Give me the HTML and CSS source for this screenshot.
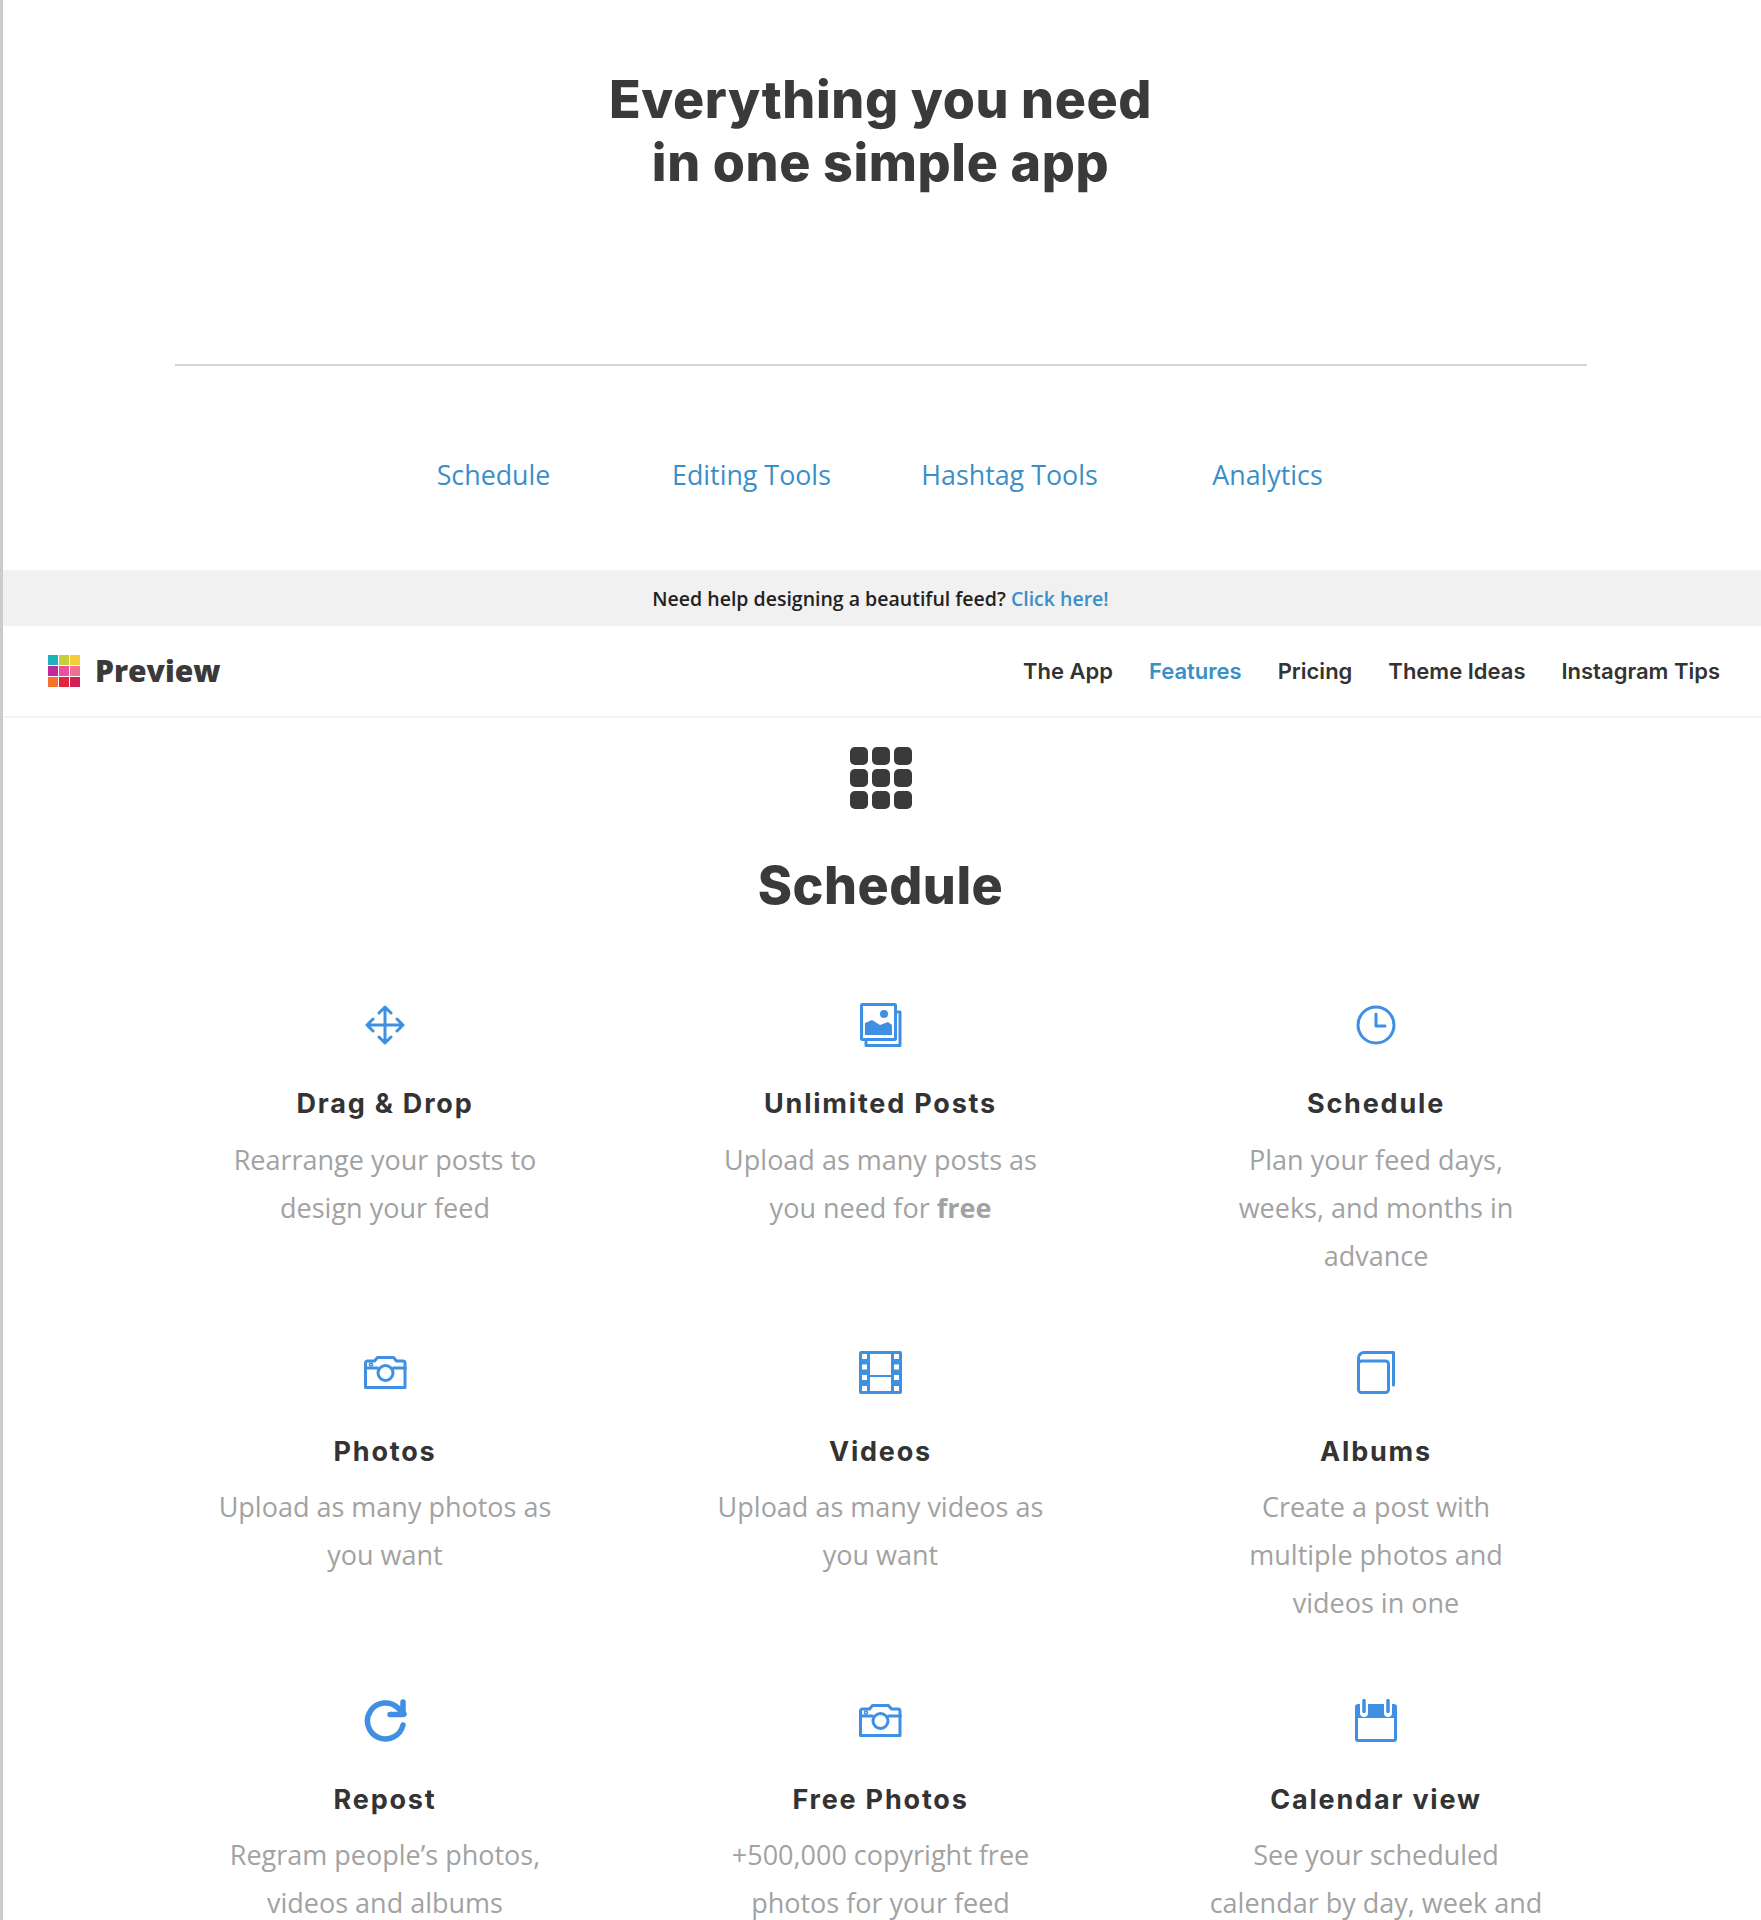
FILE: index.html
```html
<!DOCTYPE html>
<html lang="en">
<head>
  <meta charset="UTF-8" />
  <meta name="viewport" content="width=device-width, initial-scale=1.0" />
  <title>Preview - Features</title>
  <link rel="stylesheet" href="styles.css">
</head>
<body>
  <section class="intro">
    <h1>Everything you need<br>in one simple app</h1>
    <hr class="divider" />
    <div class="tabs">
      <a href="#">Schedule</a>
      <a href="#">Editing Tools</a>
      <a href="#">Hashtag Tools</a>
      <a href="#">Analytics</a>
    </div>
  </section>

  <div class="banner">Need help designing a beautiful feed? <a href="#">Click here!</a></div>

  <nav class="navbar">
    <a class="brand" href="#">
      <svg class="brand-logo" viewBox="0 0 32 32">
        <rect x="0" y="0" width="10" height="10" fill="#1fb1bd"/>
        <rect x="11" y="0" width="10" height="10" fill="#c6cf3b"/>
        <rect x="22" y="0" width="10" height="10" fill="#f6cc3f"/>
        <rect x="0" y="11" width="10" height="10" fill="#c1299b"/>
        <rect x="11" y="11" width="10" height="10" fill="#ea509f"/>
        <rect x="22" y="11" width="10" height="10" fill="#f0708f"/>
        <rect x="0" y="22" width="10" height="10" fill="#f4722b"/>
        <rect x="11" y="22" width="10" height="10" fill="#e0263f"/>
        <rect x="22" y="22" width="10" height="10" fill="#cf2356"/>
      </svg>
      <span class="brand-name">Preview</span>
    </a>
    <div class="nav-links">
      <a href="#">The App</a>
      <a href="#" class="active">Features</a>
      <a href="#">Pricing</a>
      <a href="#">Theme Ideas</a>
      <a href="#">Instagram Tips</a>
    </div>
  </nav>

  <section class="schedule">
    <svg class="section-icon" viewBox="0 0 62 62" fill="#3a3a3a">
      <rect x="0" y="0" width="18" height="18" rx="5"/>
      <rect x="22" y="0" width="18" height="18" rx="5"/>
      <rect x="44" y="0" width="18" height="18" rx="5"/>
      <rect x="0" y="22" width="18" height="18" rx="5"/>
      <rect x="22" y="22" width="18" height="18" rx="5"/>
      <rect x="44" y="22" width="18" height="18" rx="5"/>
      <rect x="0" y="44" width="18" height="18" rx="5"/>
      <rect x="22" y="44" width="18" height="18" rx="5"/>
      <rect x="44" y="44" width="18" height="18" rx="5"/>
    </svg>
    <h2>Schedule</h2>

    <div class="features">
      <div class="feature">
        <div class="feature-icon">
          <svg width="40" height="40" viewBox="0 0 40 40" class="line">
            <path d="M20 2v36M2 20h36M14 8l6-6 6 6M14 32l6 6 6-6M8 14l-6 6 6 6M32 14l6 6-6 6"/>
          </svg>
        </div>
        <h3>Drag &amp; Drop</h3>
        <p>Rearrange your posts to<br>design your feed</p>
      </div>
      <div class="feature">
        <div class="feature-icon">
          <svg width="42" height="45" viewBox="0 0 42 45">
            <path class="line" d="M6 38.5v4h34V9h-4"/>
            <rect class="line" x="1.5" y="1.5" width="34" height="35" rx="1"/>
            <circle cx="24" cy="11" r="4" fill="#3f90e2"/>
            <path d="M5 32V20l7-3 8 5 8-3 4 3v10z" fill="#3f90e2"/>
          </svg>
        </div>
        <h3>Unlimited Posts</h3>
        <p>Upload as many posts as<br>you need for <b>free</b></p>
      </div>
      <div class="feature">
        <div class="feature-icon">
          <svg width="40" height="40" viewBox="0 0 40 40" class="line">
            <circle cx="20" cy="20" r="18"/>
            <path d="M20 9v12h9"/>
          </svg>
        </div>
        <h3>Schedule</h3>
        <p>Plan your feed days,<br>weeks, and months in<br>advance</p>
      </div>

      <div class="feature">
        <div class="feature-icon">
          <svg width="43" height="33" viewBox="0 0 43 33" class="line">
            <path d="M1.5 31.5V7a2 2 0 0 1 2-2h7l3-3.5h16l3 3.5h6.500a2 2 0 0 1 2 2v24.500z"/>
            <path d="M1.500 12h12M29.500 12h12"/>
            <circle cx="21.500" cy="17" r="7.500"/>
            <circle cx="7" cy="8.500" r=".8"/>
          </svg>
        </div>
        <h3>Photos</h3>
        <p>Upload as many photos as<br>you want</p>
      </div>
      <div class="feature">
        <div class="feature-icon">
          <svg width="43" height="43" viewBox="0 0 43 43">
            <rect x="0" y="0" width="43" height="43" rx="2" fill="#3f90e2"/>
            <rect class="hole" x="11" y="3" width="21" height="21"/>
            <rect class="hole" x="11" y="26" width="21" height="14"/>
            <rect class="hole" x="3" y="3" width="5" height="5"/>
            <rect class="hole" x="3" y="13.500" width="5" height="5"/>
            <rect class="hole" x="3" y="24" width="5" height="5"/>
            <rect class="hole" x="3" y="35" width="5" height="5"/>
            <rect class="hole" x="35" y="3" width="5" height="5"/>
            <rect class="hole" x="35" y="13.500" width="5" height="5"/>
            <rect class="hole" x="35" y="24" width="5" height="5"/>
            <rect class="hole" x="35" y="35" width="5" height="5"/>
          </svg>
        </div>
        <h3>Videos</h3>
        <p>Upload as many videos as<br>you want</p>
      </div>
      <div class="feature">
        <div class="feature-icon">
          <svg width="38" height="43" viewBox="0 0 38 43" class="line">
            <rect x="1.500" y="10" width="30" height="31.500" rx="3"/>
            <path d="M1.500 13V7a5.500 5.500 0 0 1 5.500-5.500h29.500V34"/>
          </svg>
        </div>
        <h3>Albums</h3>
        <p>Create a post with<br>multiple photos and<br>videos in one</p>
      </div>

      <div class="feature">
        <div class="feature-icon">
          <svg width="43" height="43" viewBox="0 0 43 43" class="line bold">
            <path d="M39 26a18 18 0 1 1-5-17l6 6"/>
            <path d="M39 3v12.500H26"/>
          </svg>
        </div>
        <h3>Repost</h3>
        <p>Regram people’s photos,<br>videos and albums</p>
      </div>
      <div class="feature">
        <div class="feature-icon">
          <svg width="43" height="33" viewBox="0 0 43 33" class="line">
            <path d="M1.5 31.5V7a2 2 0 0 1 2-2h7l3-3.5h16l3 3.5h6.500a2 2 0 0 1 2 2v24.500z"/>
            <path d="M1.500 12h12M29.500 12h12"/>
            <circle cx="21.500" cy="17" r="7.500"/>
            <circle cx="7" cy="8.500" r=".8"/>
          </svg>
        </div>
        <h3>Free Photos</h3>
        <p>+500,000 copyright free<br>photos for your feed</p>
      </div>
      <div class="feature">
        <div class="feature-icon">
          <svg width="42" height="43" viewBox="0 0 42 43">
            <path d="M3 5h36a3 3 0 0 1 3 3v32a3 3 0 0 1-3 3H3a3 3 0 0 1-3-3V8a3 3 0 0 1 3-3z" fill="#3f90e2"/>
            <rect class="hole" x="3" y="19" width="36" height="21"/>
            <path class="cal-halo" d="M9 5v9M33 5v9"/>
            <path class="cal-ring" d="M9 1.500v11M33 1.500v11"/>
          </svg>
        </div>
        <h3>Calendar view</h3>
        <p>See your scheduled<br>calendar by day, week and</p>
      </div>
    </div>
  </section>
</body>
</html>
```

FILE: styles.css
```css
html, body {
  margin: 0;
  height: 1920px;
  overflow: hidden;
}
body {
  position: relative;
  font-family: 'Open Sans', sans-serif;
  background: #ffffff;
  color: #3a3a3a;
}
body::before {
  content: "";
  position: absolute;
  top: 0;
  left: 0;
  bottom: 0;
  width: 3px;
  background: #cccccc;
}
a { text-decoration: none; }

.intro {
  height: 570px;
  padding-top: 68px;
  box-sizing: border-box;
  text-align: center;
}
h1 {
  margin: 0;
  font-family: 'Inter', sans-serif;
  font-size: 52px;
  font-weight: 800;
  letter-spacing: .6px;
  line-height: 63px;
}
.divider {
  width: 1412px;
  margin: 170px auto 0;
  border: none;
  border-top: 2px solid #d4d4d4;
}
.tabs {
  display: grid;
  grid-template-columns: repeat(4, 258px);
  justify-content: center;
  margin-top: 89px;
  line-height: 40px;
}
.tabs a {
  color: #3a8fc9;
  font-size: 26.800px;
}

.banner {
  height: 56px;
  line-height: 57px;
  text-align: center;
  background: #f1f1f1;
  color: #222;
  font-size: 19.500px;
  font-weight: 600;
}
.banner a { color: #3a8fc9; }

.navbar {
  display: flex;
  justify-content: space-between;
  align-items: center;
  height: 90px;
  padding: 0 41px 0 48px;
  border-bottom: 2px solid #f4f4f4;
}
.brand {
  display: flex;
  align-items: center;
  gap: 15px;
  color: #3a3a3a;
  font-size: 30px;
  font-weight: 800;
}
.brand-logo {
  width: 32px;
  height: 32px;
}
.brand-name { margin-bottom: 2px; }
.nav-links {
  display: flex;
  gap: 36px;
}
.nav-links a {
  font-family: 'Inter', sans-serif;
  font-size: 22px;
  font-weight: 600;
  color: #333;
}
.nav-links a.active { color: #3a8fc9; }

.schedule {
  text-align: center;
  padding-top: 29px;
}
.section-icon {
  display: block;
  width: 62px;
  height: 62px;
  margin: 0 auto;
}
h2 {
  margin: 42px 0 0;
  font-family: 'Inter', sans-serif;
  font-size: 52px;
  font-weight: 800;
  letter-spacing: .5px;
  line-height: 70px;
}
.features {
  display: grid;
  grid-template-columns: repeat(3, 495.5px);
  justify-content: center;
  row-gap: 68.300px;
  margin-top: 79px;
}
.feature-icon {
  display: flex;
  justify-content: center;
  align-items: center;
  height: 50px;
}
.feature h3 {
  margin: 34px 0 0;
  font-family: 'Inter', sans-serif;
  font-size: 27px;
  font-weight: 700;
  letter-spacing: 1.800px;
  line-height: 40px;
  color: #333;
}
.feature p {
  margin: 11.500px 0 0;
  font-size: 27px;
  line-height: 48px;
  color: #a2a2a2;
}
.line, .line circle, .line path {
  fill: none;
  stroke: #3f90e2;
  stroke-width: 3px;
  stroke-linecap: round;
  stroke-linejoin: round;
}
.line.bold, .line.bold path { stroke-width: 5.500px; }
.hole { fill: #ffffff; }
.cal-halo {
  fill: none;
  stroke: #ffffff;
  stroke-width: 8px;
  stroke-linecap: round;
}
.cal-ring {
  fill: none;
  stroke: #3f90e2;
  stroke-width: 3.500px;
  stroke-linecap: round;
}
```
